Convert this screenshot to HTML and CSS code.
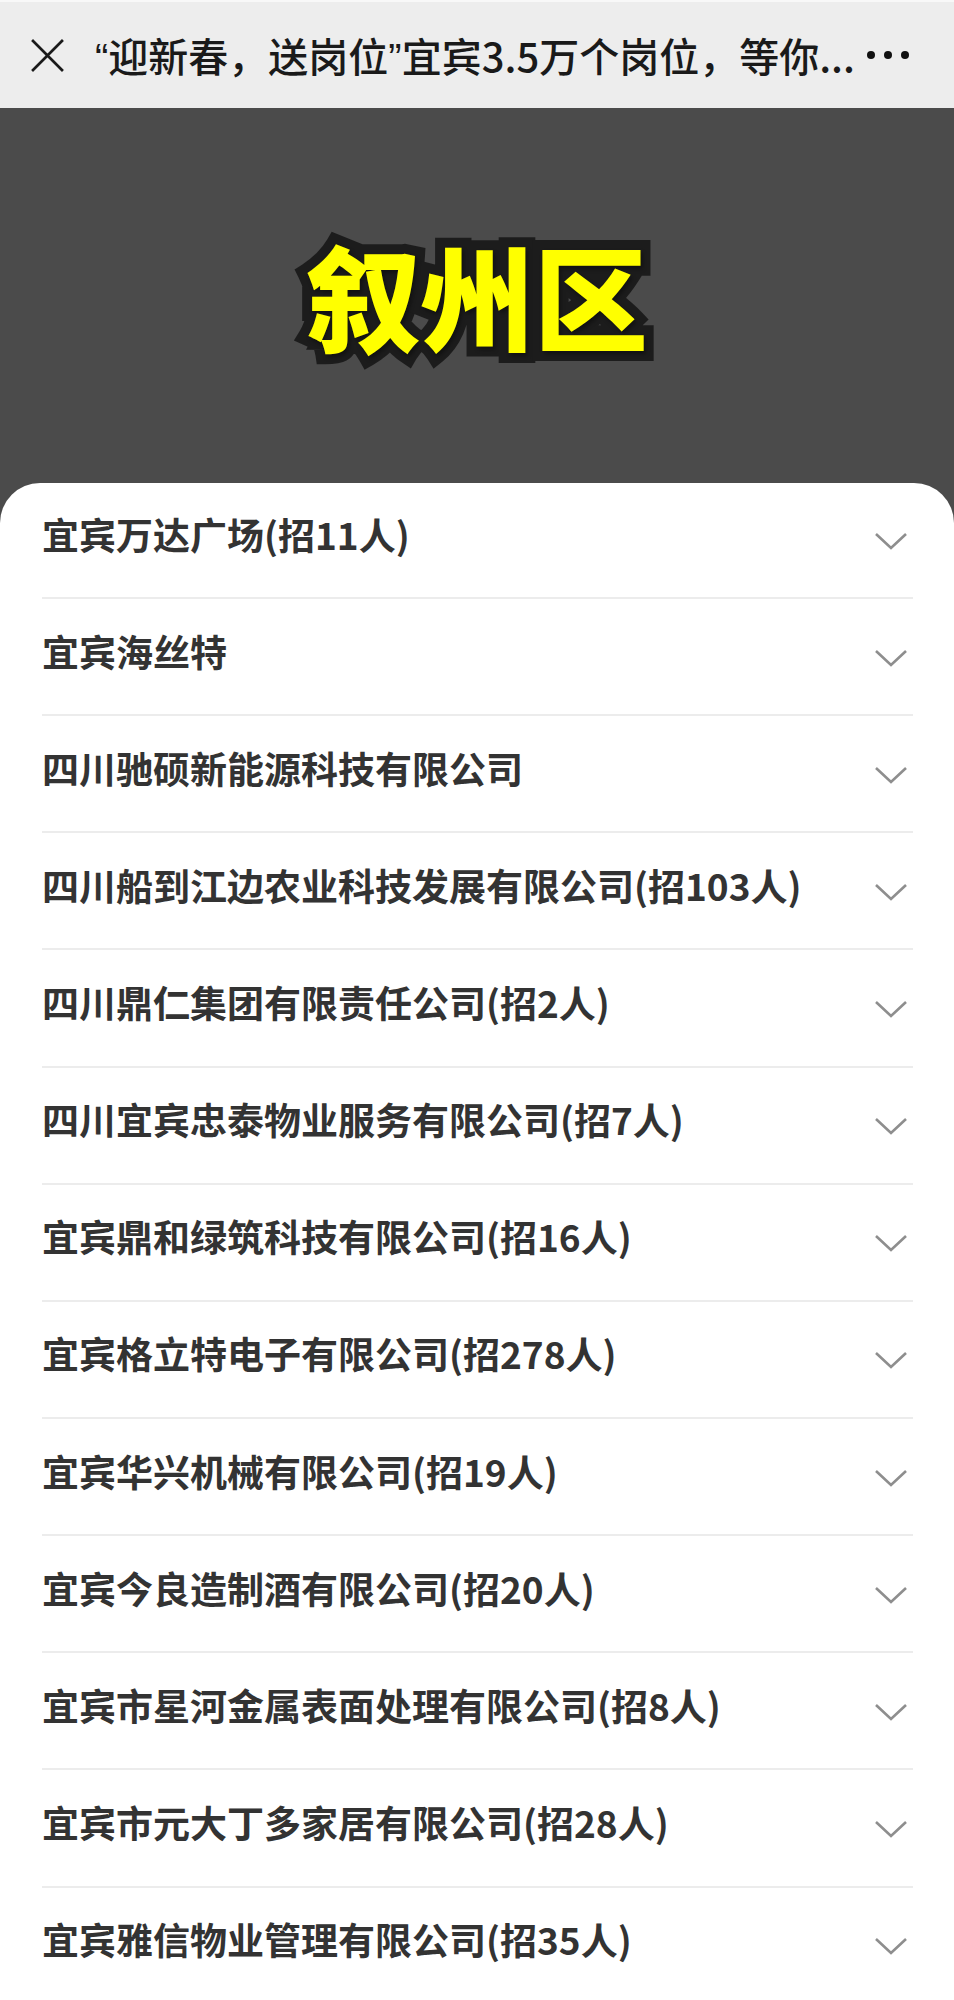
FILE: index.html
```html
<!DOCTYPE html>
<html lang="zh-CN">
<head>
    <meta charset="UTF-8">
    <meta name="viewport" content="width=device-width, initial-scale=1.0">
    <title>叙州区岗位</title>
    <link rel="stylesheet" href="styles.css">
</head>
<body>
    <div class="topbar">
        <svg class="close-icon" width="34" height="34" viewBox="0 0 34 34">
            <path d="M2 2 L32 32 M32 2 L2 32" stroke="#1a1a1a" stroke-width="2.6" fill="none"/>
        </svg>
        <div class="topbar-title"><span class="q">“</span>迎新春，送岗位<span class="q">”</span>宜宾3.5万个岗位，等你...</div>
        <div class="more-icon"><span></span><span></span><span></span></div>
    </div>

    <div class="hero">
        <h1>叙州区</h1>
    </div>

    <div class="card">
        <div class="row"><span>宜宾万达广场(招11人)</span><svg class="chevron" viewBox="0 0 34 18"><polyline points="2,2 17,16 32,2"/></svg></div>
        <div class="row"><span>宜宾海丝特</span><svg class="chevron" viewBox="0 0 34 18"><polyline points="2,2 17,16 32,2"/></svg></div>
        <div class="row"><span>四川驰硕新能源科技有限公司</span><svg class="chevron" viewBox="0 0 34 18"><polyline points="2,2 17,16 32,2"/></svg></div>
        <div class="row"><span>四川船到江边农业科技发展有限公司(招103人)</span><svg class="chevron" viewBox="0 0 34 18"><polyline points="2,2 17,16 32,2"/></svg></div>
        <div class="row"><span>四川鼎仁集团有限责任公司(招2人)</span><svg class="chevron" viewBox="0 0 34 18"><polyline points="2,2 17,16 32,2"/></svg></div>
        <div class="row"><span>四川宜宾忠泰物业服务有限公司(招7人)</span><svg class="chevron" viewBox="0 0 34 18"><polyline points="2,2 17,16 32,2"/></svg></div>
        <div class="row"><span>宜宾鼎和绿筑科技有限公司(招16人)</span><svg class="chevron" viewBox="0 0 34 18"><polyline points="2,2 17,16 32,2"/></svg></div>
        <div class="row"><span>宜宾格立特电子有限公司(招278人)</span><svg class="chevron" viewBox="0 0 34 18"><polyline points="2,2 17,16 32,2"/></svg></div>
        <div class="row"><span>宜宾华兴机械有限公司(招19人)</span><svg class="chevron" viewBox="0 0 34 18"><polyline points="2,2 17,16 32,2"/></svg></div>
        <div class="row"><span>宜宾今良造制酒有限公司(招20人)</span><svg class="chevron" viewBox="0 0 34 18"><polyline points="2,2 17,16 32,2"/></svg></div>
        <div class="row"><span>宜宾市星河金属表面处理有限公司(招8人)</span><svg class="chevron" viewBox="0 0 34 18"><polyline points="2,2 17,16 32,2"/></svg></div>
        <div class="row"><span>宜宾市元大丁多家居有限公司(招28人)</span><svg class="chevron" viewBox="0 0 34 18"><polyline points="2,2 17,16 32,2"/></svg></div>
        <div class="row"><span>宜宾雅信物业管理有限公司(招35人)</span><svg class="chevron" viewBox="0 0 34 18"><polyline points="2,2 17,16 32,2"/></svg></div>
    </div>
</body>
</html>
```

FILE: styles.css
```css
body {
    margin: 0;
    font-family: "Noto Sans CJK SC", "Noto Sans", sans-serif;
    background: #4b4b4b;
}

.topbar {
    height: 108px;
    box-sizing: border-box;
    border-top: 2px solid #f8f8f8;
    background: #ededed;
    display: flex;
    align-items: center;
    padding: 0 0 0 30px;
}

.close-icon {
    flex: none;
    width: 35px;
    height: 35px;
}

.topbar-title {
    margin-left: 30px;
    font-size: 40px;
    font-weight: 500;
    color: #1a1a1a;
    white-space: nowrap;
}

.topbar-title .q {
    font-family: "Liberation Sans", sans-serif;
}

.more-icon {
    display: flex;
    gap: 9px;
    margin-left: 12px;
}

.more-icon span {
    width: 8px;
    height: 8px;
    border-radius: 50%;
    background: #111;
}

.hero {
    height: 375px;
    display: flex;
    justify-content: center;
    align-items: center;
}

.hero h1 {
    margin: 0 0 4px;
    font-size: 114px;
    font-weight: 900;
    line-height: 1;
    color: #ffff00;
    -webkit-text-stroke: 20px #1c1c1c;
    paint-order: stroke fill;
    text-shadow: 2px 3px 4px rgba(0,0,0,0.4);
}

.card {
    background: #fff;
    border-radius: 40px 40px 0 0;
    padding: 0 41px 40px 42px;
}

.row {
    height: 117.15px;
    box-sizing: border-box;
    border-bottom: 2px solid #ececec;
    display: flex;
    align-items: center;
    justify-content: space-between;
    font-size: 37px;
    font-weight: 700;
    color: #333;
    padding: 0 5px 12px 0;
}

.row:first-child {
    height: 116px;
    padding-bottom: 13px;
}

.chevron {
    width: 34px;
    height: 18px;
    margin-top: 14px;
    fill: none;
    stroke: #8e8e8e;
    stroke-width: 2.6;
}
```
